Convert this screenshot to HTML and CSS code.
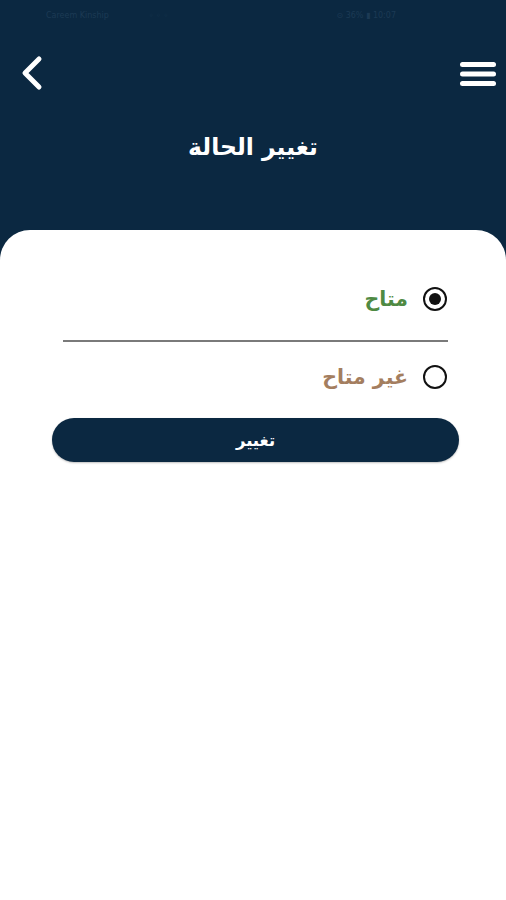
FILE: index.html
```html
<!DOCTYPE html>
<html lang="ar">
<head>
<meta charset="utf-8">
<link rel="stylesheet" href="styles.css">
</head>
<body>
<div class="page">
  <div class="status">
    <div class="status-left">
      <span>Careem Kinship</span>
      <span>◦ ◦ ◦</span>
    </div>
    <div class="status-right">⊙ 36% ▮ 10:07</div>
  </div>
  <div class="topbar">
    <svg class="back" width="28" height="40" viewBox="0 0 28 40">
      <path d="M21 5 L7 19 L21 33" fill="none" stroke="#fff" stroke-width="5" stroke-linecap="round" stroke-linejoin="round"/>
    </svg>
    <svg class="menu" width="40" height="30" viewBox="0 0 40 30">
      <rect x="2" y="3" width="36" height="5" rx="2.5" fill="#fff"/>
      <rect x="2" y="12.5" width="36" height="5" rx="2.5" fill="#fff"/>
      <rect x="2" y="22" width="36" height="5" rx="2.5" fill="#fff"/>
    </svg>
  </div>
  <h1 class="title">تغيير الحالة</h1>
  <div class="card">
    <div class="options" dir="rtl">
      <div class="option">
        <span class="radio checked"></span>
        <span class="label available">متاح</span>
      </div>
      <div class="divider"></div>
      <div class="option">
        <span class="radio"></span>
        <span class="label unavailable">غير متاح</span>
      </div>
    </div>
    <button class="submit">تغيير</button>
  </div>
</div>
</body>
</html>
```
FILE: styles.css
```css
* { box-sizing: border-box; }
html, body { margin: 0; padding: 0; }
body {
  width: 506px;
  height: 900px;
  background: #ffffff;
  font-family: "DejaVu Sans", "Noto Sans", sans-serif;
  overflow: hidden;
}
.page {
  display: flex;
  flex-direction: column;
  height: 900px;
  background: #0b2841;
}
.status {
  height: 30px;
  display: flex;
  justify-content: space-between;
  align-items: center;
  padding: 0 110px 0 46px;
  font-size: 8px;
  color: #1c3a54;
}
.status-left { display: flex; gap: 40px; }
.topbar {
  display: flex;
  justify-content: space-between;
  align-items: center;
  padding: 0 8px 0 18px;
  height: 60px;
  margin-top: 14px;
}
.back { display: block; }
.menu { display: block; }
.title {
  margin: 0;
  text-align: center;
  color: #ffffff;
  font-size: 23.5px;
  font-weight: bold;
  line-height: 30px;
  padding-top: 28px;
  height: 126px;
}
.card {
  flex: 1;
  background: #ffffff;
  border-radius: 30px 30px 0 0;
  padding-top: 47px;
  display: flex;
  flex-direction: column;
}
.options {
  display: flex;
  flex-direction: column;
  padding: 0 58px 0 63px;
}
.option {
  display: flex;
  align-items: center;
  height: 44px;
  padding-right: 1px;
  gap: 15px;
}
.radio {
  width: 24px;
  height: 24px;
  border: 2.5px solid #111;
  border-radius: 50%;
  display: flex;
  align-items: center;
  justify-content: center;
  flex: none;
}
.radio.checked::after {
  content: "";
  width: 12px;
  height: 12px;
  border-radius: 50%;
  background: #111;
}
.label {
  font-size: 20.5px;
  font-weight: bold;
}
.available { color: #4f8a43; }
.unavailable { color: #a47e5f; }
.divider {
  height: 2px;
  background: #7a7a7a;
  margin: 19px 0 13px;
}
.submit {
  margin: 19px 47px 0 52px;
  height: 44px;
  border: none;
  border-radius: 22px;
  background: #0b2841;
  color: #fff;
  font-family: "DejaVu Sans", sans-serif;
  font-weight: bold;
  font-size: 16.5px;
  box-shadow: 0 1px 2px rgba(0,0,0,0.25);
}
```
